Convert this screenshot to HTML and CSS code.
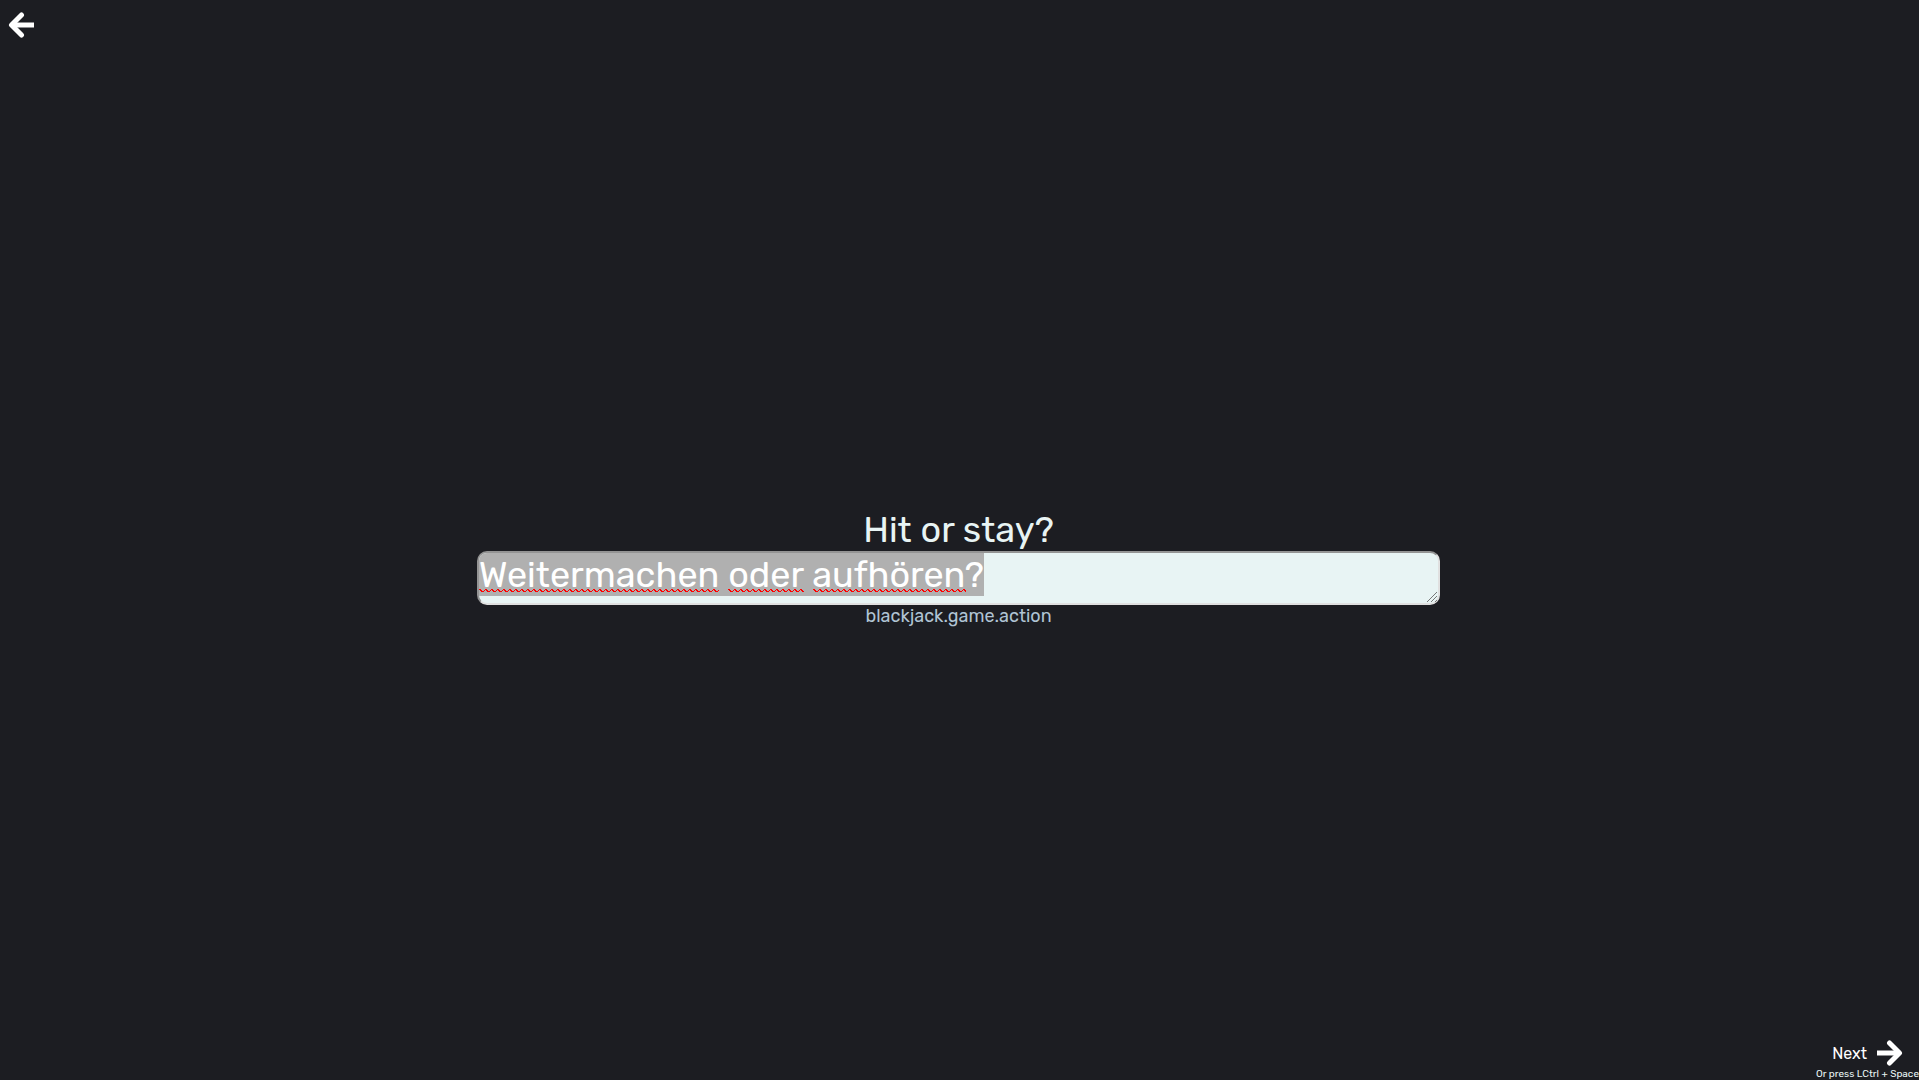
FILE: index.html
```html
<!DOCTYPE html>
<html lang="en">
<head>
<meta charset="utf-8">
<title>Translate</title>
<link rel="stylesheet" href="styles.css">
</head>
<body>
<header class="top">
  <button class="icon-button" type="button" aria-label="Back">
    <svg class="arrow" viewBox="0 0 26 26" aria-hidden="true"><path d="M26 13H4" stroke-linecap="butt"/><path d="M13.500 3L3.500 13L13.500 23"/></svg>
  </button>
</header>
<main class="translation">
  <label class="source" for="translation">Hit or stay?</label>
  <div class="field">
    <textarea class="editor" id="translation" rows="1" lang="de" spellcheck="false" autofocus>Weitermachen oder aufhören?</textarea>
    <div class="spelling" aria-hidden="true"><span class="wave wave-long"></span><span class="wave wave-short"></span><span class="wave wave-medium"></span></div>
  </div>
  <p class="key">blackjack.game.action</p>
</main>
<footer class="bottom">
  <button class="next" type="button">Next
    <svg class="arrow" viewBox="0 0 26 26" aria-hidden="true"><path d="M0 13H22" stroke-linecap="butt"/><path d="M12.500 3L22.500 13L12.500 23"/></svg>
  </button>
  <p class="hint">Or press LCtrl + Space</p>
</footer>
<script src="script.js"></script>
</body>
</html>
```
FILE: styles.css
```css
* { box-sizing: border-box; }

body {
  margin: 0;
  min-height: 100vh;
  display: grid;
  grid-template-rows: auto 1fr auto;
  background: #1c1d22;
  color: #e8f4f4;
  font-family: Rubik, Roboto, sans-serif;
}

button {
  border: 0;
  padding: 0;
  background: none;
  color: #fff;
  font: inherit;
}

.arrow {
  display: block;
  width: 26px;
  height: 26px;
  fill: none;
  stroke: currentColor;
  stroke-width: 5;
  stroke-linecap: round;
  stroke-linejoin: round;
}

.top { padding: 12px 8px 10px; }

.icon-button { display: block; }

.translation {
  display: flex;
  flex-direction: column;
  align-items: center;
  justify-content: center;
  padding: 47px 2px 0 0;
}

.source {
  font-size: 36px;
  line-height: 43px;
}

.field {
  position: relative;
  width: 50.25%;
}

.editor {
  display: block;
  width: 100%;
  height: 54px;
  padding: 0;
  border: 2px solid #e0e0e0;
  border-color: #949494 #e0e0e0 #e0e0e0 #949494;
  border-radius: 10px;
  outline: 0;
  background: #e8f4f4;
  color: #1c1d22;
  font: inherit;
  font-size: 36px;
  line-height: 43px;
  resize: vertical;
  overflow: hidden;
}

.editor::selection {
  background: #b0b0b0;
  color: #fff;
}

.editor::-webkit-resizer {
  background: url("data:image/svg+xml,%3Csvg xmlns='http://www.w3.org/2000/svg' width='12' height='12'%3E%3Cpath d='M1 11L11 1M5 11L11 5M9 11L11 9' stroke='%23777' stroke-width='1'/%3E%3C/svg%3E") right bottom no-repeat;
}

.spelling {
  position: absolute;
  top: 38px;
  left: 2px;
  display: flex;
  gap: 9px;
  pointer-events: none;
}

.wave {
  height: 3px;
  background: url("data:image/svg+xml,%3Csvg xmlns='http://www.w3.org/2000/svg' width='6' height='3'%3E%3Cpath d='M0 0h2v1h1v1h2v-1h1v1h-1v1h-3v-1h-1v-1h-1z' fill='red'/%3E%3C/svg%3E") repeat-x;
}

.wave-long { width: 240px; }
.wave-short { width: 76px; }
.wave-medium { width: 153px; }

.key {
  margin: 0;
  color: #b0c4d4;
  font-size: 18px;
  line-height: 22px;
}

.bottom {
  display: flex;
  flex-direction: column;
  align-items: flex-end;
}

.next {
  display: flex;
  align-items: center;
  gap: 10px;
  margin-right: 16px;
  font-size: 16px;
}

.hint {
  margin: 0;
  padding-top: 3px;
  font-size: 10px;
  line-height: 11px;
}
```
FILE: script.js
```javascript
const editor = document.getElementById("translation");
editor.focus();
editor.select();
```
